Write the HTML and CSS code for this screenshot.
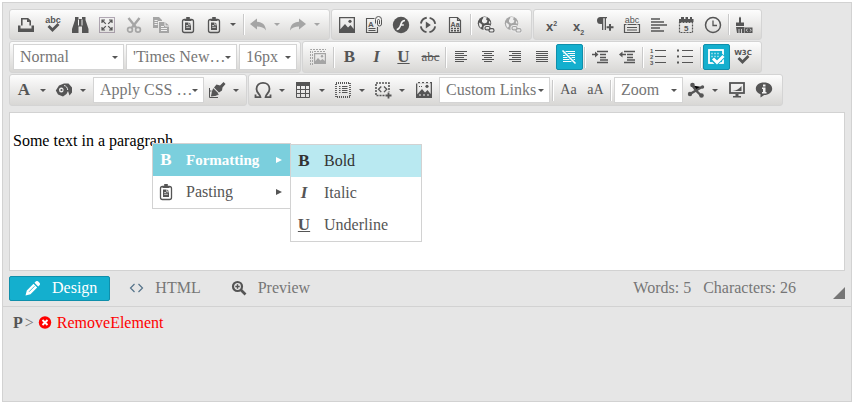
FILE: index.html
```html
<!DOCTYPE html>
<html lang="en">
<head>
<meta charset="utf-8">
<title>Editor</title>
<link rel="stylesheet" href="styles.css">
</head>
<body>
<svg class="sprite" aria-hidden="true">
  <symbol id="print" viewBox="0 0 18 18"><path fill="none" stroke="currentColor" stroke-width="1.600" d="M4.800 9.500V2.800h6l2.400 2.400V9.500"/><path fill="currentColor" d="M1 9.500h2.500v3h11v-3H17V16H1zM10 2.500v3.500h3.500z"/></symbol>
  <symbol id="spell" viewBox="0 0 18 18"><text class="g-sans" x="9" y="6.500" font-size="9" text-anchor="middle">abc</text><path fill="none" stroke="currentColor" stroke-width="2.800" d="M4.500 10l4 4 6-6"/></symbol>
  <symbol id="find" viewBox="0 0 18 18"><path fill="currentColor" d="M4 1h3.500v2H11V1h3.500v3L17.500 13v4H11v-6.500H7.500V17H1v-4L4 4z"/><path stroke="#f4f4f4" d="M7.500 3.500v6M11 3.500v6" stroke-width="1"/></symbol>
  <symbol id="selectall" viewBox="0 0 18 18"><rect x="1.500" y="1.500" width="15" height="15" fill="none" stroke="#6d5a72" stroke-dasharray="1 1"/><path fill="none" stroke="currentColor" stroke-width="1.200" d="M4 7V4h3M11 4h3v3M14 11v3h-3M7 14H4v-3M4 4l3.800 3.800M14 4l-3.800 3.800M4 14l3.800-3.800M14 14l-3.800-3.800"/></symbol>
  <symbol id="cut" viewBox="0 0 18 18"><path fill="none" stroke="currentColor" stroke-width="2.400" d="M3.500 2l7.500 9.500M14.500 2L7 11.500"/><circle cx="5" cy="13.800" r="2.400" fill="none" stroke="currentColor" stroke-width="1.700"/><circle cx="13" cy="13.800" r="2.400" fill="none" stroke="currentColor" stroke-width="1.700"/></symbol>
  <symbol id="copy" viewBox="0 0 18 18"><path fill="currentColor" d="M1 1h6l3 3v1H6v7H1z"/><path fill="currentColor" d="M7 6h6l4 3.500V17H7z"/><path stroke="#f0f0f0" d="M2.500 4.500h3M2.500 6.500h3M2.500 8.500h3M9 10.500h3M9 12.500h6M9 14.500h6M13 6v4h4" fill="none"/></symbol>
  <symbol id="paste" viewBox="0 0 18 18"><rect x="3.500" y="3.500" width="11" height="13" rx="2" fill="none" stroke="currentColor" stroke-width="1.300"/><path fill="currentColor" d="M5.500 5V3h1.700V1h3.600v2h1.700v2zM6 6.500h3.500v2.700H12V14H6z"/><path fill="currentColor" d="M10.200 6.500l2 2h-2z"/><path d="M7.200 9.500H9M7.200 11.300h3.600" stroke="#eee" stroke-width=".8"/></symbol>
  <symbol id="undo" viewBox="0 0 18 18"><path fill="currentColor" d="M1 8L8 2.500v3.300c5.500.2 8.500 3.200 9 8.700-2-3-5-4-9-4v3z"/></symbol>
  <symbol id="redo" viewBox="0 0 18 18"><path fill="currentColor" d="M17 8l-7-5.500v3.300c-5.500.2-8.500 3.200-9 8.700 2-3 5-4 9-4v3z"/></symbol>
  <symbol id="image" viewBox="0 0 18 18"><path fill="currentColor" fill-rule="evenodd" d="M1 1h16v16H1zM2.300 2.300v11L7 8l3 3.500L12.500 9l3.200 4V2.300z"/><circle cx="12" cy="5.300" r="1.600" fill="currentColor"/></symbol>
  <symbol id="attach" viewBox="0 0 18 18"><path fill="none" stroke="currentColor" stroke-width="1.100" d="M9.500 2.500h-8v14h11V11M3.500 14.500h7M3.500 12.500h7"/><text class="g-sans" x="3" y="10.700" font-size="8">A</text><path fill="none" stroke="currentColor" stroke-width="1" d="M10.500 7.500V3.500a3 3 0 0 1 6 0V8a2 2 0 0 1-4 0V4.500a1 1 0 0 1 2 0V8"/></symbol>
  <symbol id="flash" viewBox="0 0 18 18"><circle cx="9" cy="9" r="8.200" fill="currentColor"/><path fill="none" stroke="#f4f4f4" stroke-width="1.600" d="M13 4.500c-3.500 0-3.500 2-4.300 4.500s-1.400 4.500-4 4.500M8 9h3.800"/></symbol>
  <symbol id="media" viewBox="0 0 18 18"><circle cx="9" cy="9" r="7.300" fill="none" stroke="currentColor" stroke-width="1.900" stroke-dasharray="8.500 2.960" stroke-dashoffset="10"/><path fill="currentColor" d="M6.800 5.500l5 3.500-5 3.500z"/></symbol>
  <symbol id="template" viewBox="0 0 18 18"><path fill="none" stroke="currentColor" stroke-width="1.200" d="M3.500 1.500h8l3 3v12h-11zM11.500 1.500v3h3"/><text class="g-sans" x="4.600" y="10.500" font-size="7">Aa</text><path stroke="currentColor" stroke-width="1.400" stroke-dasharray="2 1" d="M5 12.500h8M5 14.700h8"/></symbol>
  <symbol id="link" viewBox="0 0 18 18"><circle cx="7.500" cy="7.200" r="6.700" fill="currentColor"/><path fill="#eee" d="M6.500 1c1.500-.2 2.500 0 3.500.5L9 3.200l1.500 1.500-1 2-2.500.8-2-1.500V4L6 2.500zM2.200 6.500l2.500 1.700.3 2-1.200 1.600C2.300 10.500 1.800 8.500 2.200 6.500zM12 5l1.200.8.2 2-1.600-.5z"/><g fill="none" stroke="#ebebeb" stroke-width="3.200"><rect x="8" y="10.500" width="5" height="3.300" rx="1.600"/><rect x="12" y="12.700" width="5" height="3.300" rx="1.600"/></g><g fill="none" stroke="currentColor" stroke-width="1.200"><rect x="8" y="10.500" width="5" height="3.300" rx="1.600"/><rect x="12" y="12.700" width="5" height="3.300" rx="1.600"/></g></symbol>
  <symbol id="para" viewBox="0 0 18 18"><path fill="currentColor" d="M4.500 1H11v1.200h-1V14H8.700V2.200H7.300V14H6V8H4.500a3.500 3.500 0 0 1 0-7zM13 8h2v2.300h2.500v2H15v2.400h-2v-2.400h-2.400v-2H13z"/></symbol>
  <symbol id="groupbox" viewBox="0 0 18 18"><text class="g-plain" x="9" y="6.500" font-size="9" text-anchor="middle">abc</text><path fill="none" stroke="currentColor" stroke-width="1.200" d="M3.500 8.500h-2v8h15v-8h-2M4.500 8.500h9M4 11.500h10M4 14h10"/></symbol>
  <symbol id="rule" viewBox="0 0 18 18"><path stroke="currentColor" stroke-width="1.500" d="M1 3h9M1 6h13M1 9h16M1 12h9M1 15h13"/></symbol>
  <symbol id="date" viewBox="0 0 18 18"><path fill="currentColor" d="M2 3h2V1h3v2h1.500V1H11v2h2V1h2v2h1.500v3H2z"/><rect x="2.500" y="6.500" width="13" height="10" fill="none" stroke="currentColor" stroke-dasharray="2 1" stroke-width="1.200"/><text class="g-sans" x="9.200" y="14.500" font-size="8" text-anchor="middle">5</text></symbol>
  <symbol id="time" viewBox="0 0 18 18"><circle cx="9" cy="9" r="7.500" fill="none" stroke="currentColor" stroke-width="1.500"/><path fill="none" stroke="currentColor" stroke-width="1.300" d="M9 4.500v5h4"/></symbol>
  <symbol id="strip" viewBox="0 0 18 18"><path fill="currentColor" d="M4 2l1-1.500L6 2v4.500h3V10H1V6.500h3zM1 11h8.500v6H2z"/><rect x="10" y="11.500" width="7.500" height="5.500" fill="currentColor"/><path stroke="#eee" d="M4 13v4M6.500 13v4M12.500 12.700l-1.200 1.500 1.200 1.500M15 12.700l1.200 1.500-1.200 1.500" fill="none" stroke-width=".8"/></symbol>
  <symbol id="position" viewBox="0 0 18 18"><path fill="none" stroke="currentColor" stroke-dasharray="2 1" d="M1.500 17V1.500H17M3.500 17V3.500H17"/><path fill="currentColor" fill-rule="evenodd" d="M5 5h12v11H5zM6.200 6.200v7L9 10l2.500 2.500L13.500 11l2.300 2V6.200z"/><circle cx="13" cy="8.300" r="1.200" fill="currentColor"/></symbol>
  <symbol id="left" viewBox="0 0 18 18"><path stroke="currentColor" stroke-width="1" d="M3 3.500h12M3 5.500h9M3 7.500h12M3 9.500h9M3 11.500h12M3 13.500h9"/></symbol>
  <symbol id="center" viewBox="0 0 18 18"><path stroke="currentColor" stroke-width="1" d="M3 3.500h12M5 5.500h8M3 7.500h12M5 9.500h8M3 11.500h12M5 13.500h8"/></symbol>
  <symbol id="right" viewBox="0 0 18 18"><path stroke="currentColor" stroke-width="1" d="M3 3.500h12M6 5.500h9M3 7.500h12M6 9.500h9M3 11.500h12M6 13.500h9"/></symbol>
  <symbol id="full" viewBox="0 0 18 18"><path stroke="currentColor" stroke-width="1" d="M3 3.500h12M3 5.500h12M3 7.500h12M3 9.500h12M3 11.500h12M3 13.500h12"/></symbol>
  <symbol id="nojust" viewBox="0 0 18 18"><path stroke="currentColor" stroke-width="1" d="M3 3.500h12M3 5.500h12M3 7.500h12M3 9.500h12M3 11.500h12M3 13.500h12"/><path stroke="#14afce" stroke-width="3" d="M3 3l12 12"/><path stroke="currentColor" stroke-width="1.600" d="M2.500 2.500l13 13"/></symbol>
  <symbol id="indent" viewBox="0 0 18 18"><path stroke="currentColor" stroke-width="1.400" d="M6 3.500h11M9 6.500h6M9 9.500h6M9 12h8M6 14.500h11M1 6.500h4"/><path fill="currentColor" d="M4 3.500l3.500 3L4 9.500z"/></symbol>
  <symbol id="outdent" viewBox="0 0 18 18"><path stroke="currentColor" stroke-width="1.400" d="M6 3.500h11M9 6.500h6M9 9.500h6M9 12h8M6 14.500h11M4 6.500h4"/><path fill="currentColor" d="M4.500 3.500L1 6.500l3.500 3z"/></symbol>
  <symbol id="ol" viewBox="0 0 18 18"><path stroke="currentColor" stroke-width="1" d="M6 2.500h11M6 8.500h11M6 14.500h11"/><g class="g-sans" font-size="6"><text x="1" y="4.500">1</text><text x="1" y="10.500">2</text><text x="1" y="16.500">3</text></g></symbol>
  <symbol id="ul" viewBox="0 0 18 18"><path stroke="currentColor" stroke-width="1" d="M6 2.500h11M6 8.500h11M6 14.500h11"/><path fill="currentColor" d="M1 1.500h2v2H1zM1 7.500h2v2H1zM1 13.500h2v2H1z"/></symbol>
  <symbol id="borders" viewBox="0 0 18 18"><rect x="2" y="2" width="14" height="13" fill="none" stroke="currentColor" stroke-width="1.800"/><path stroke="currentColor" stroke-dasharray="1 2" stroke-width="1.300" d="M4.500 5.500h9M4.500 8.500h9"/><path fill="none" stroke="#14afce" stroke-width="5" d="M5.500 10.500l4 4 7.500-7"/><path fill="none" stroke="currentColor" stroke-width="3" d="M6 10.500l4 4 6.500-6.500"/></symbol>
  <symbol id="w3c" viewBox="0 0 18 18"><text class="g-bold" x="9" y="6.500" font-size="7" text-anchor="middle">W3C</text><path fill="none" stroke="currentColor" stroke-width="2.800" d="M4.500 10l4 4 6-6"/></symbol>
  <symbol id="fill" viewBox="0 0 18 18"><path fill="currentColor" d="M.8 9.500L4 4.500 9 2.500h4.500l3.500 4v5l-2.500 3-1.500-4.500-1.500 3-3.500 2.500-5-2z"/><ellipse cx="6.300" cy="9" rx="2.300" ry="2.600" fill="#eee"/><circle cx="6.500" cy="9" r="1.100" fill="currentColor"/><path fill="none" stroke="#e9e9e9" d="M9 4.500c2 .3 3.500 2 3.700 4.500"/></symbol>
  <symbol id="format" viewBox="0 0 18 18"><path fill="currentColor" d="M12 4.500L15.500 1 17.500 3 14.500 6.500l-.5 3-3 2-5-5 2.500-3z"/><path fill="currentColor" d="M5.300 7.200l5 5-2.300 2.600-5 .7 1-5.500z"/><path fill="none" stroke="currentColor" d="M1.500 7v9.500H10M3.500 14.500l7-1M1.500 10h2"/></symbol>
  <symbol id="omega" viewBox="0 0 18 18"><path fill="none" stroke="currentColor" stroke-width="1.800" d="M1.500 13.500v2.700h5c0-3-4-4-4-8.200C2.500 4 5.500 1.800 9 1.800S15.500 4 15.500 8c0 4.200-4 5.200-4 8.200h5v-2.700"/></symbol>
  <symbol id="table" viewBox="0 0 18 18"><path fill="currentColor" d="M2 1h14v4H2z"/><path fill="none" stroke="currentColor" d="M2.500 5v11.500h13V5M2 8.500h14M2 12.500h14M6.500 5v12M11.500 5v12"/></symbol>
  <symbol id="snippet" viewBox="0 0 18 18"><rect x="2" y="2" width="14" height="14" fill="none" stroke="currentColor" stroke-width="1.800" stroke-dasharray="1 1"/><path stroke="currentColor" d="M5 5.500h1.500M8 5.500h5.500M5 7.500h1.500M8 7.500h5.500M5 9.500h1.500M8 9.500h5.500M5 11.500h1.500M8 11.500h5.500"/></symbol>
  <symbol id="codeadd" viewBox="0 0 18 18"><path fill="none" stroke="currentColor" stroke-width="1.600" stroke-dasharray="2 1" d="M10.500 14.500H2V2h13v8.500"/><path fill="none" stroke="currentColor" stroke-width="1.300" d="M7.300 5.500L4.500 8.300l2.800 2.800M10 5.500l2.800 2.800L10 11.100"/><path stroke="currentColor" stroke-width="1.800" d="M14.500 11.500v6M11.500 14.500h6"/></symbol>
  <symbol id="imagemap" viewBox="0 0 18 18"><use href="#image"/><path stroke="#eee" stroke-width="1.500" stroke-dasharray="2 2" d="M1 1.700h16"/><path stroke="#eee" stroke-width="1.200" stroke-dasharray="2 2" d="M4 14h10"/><path stroke="currentColor" d="M4 5.500h4" stroke-dasharray="1 1"/></symbol>
  <symbol id="nodes" viewBox="0 0 18 18"><path stroke="currentColor" stroke-width="2.400" d="M5.500 4.500l3.500 5 6-3.500M9 9.500l-6 3.500M9 9.500l5 5"/><g fill="currentColor"><circle cx="5.500" cy="4" r="2.300"/><circle cx="15.500" cy="6" r="1.700"/><circle cx="3" cy="13" r="2.200"/><circle cx="14.500" cy="14.500" r="2.300"/></g></symbol>
  <symbol id="monitor" viewBox="0 0 18 18"><rect x="2" y="2" width="14" height="10" fill="none" stroke="currentColor" stroke-width="1.800"/><path fill="currentColor" d="M4.500 10C8.500 9.500 11 8 13.500 5v5zM7.500 13h3v2H13v1.500H5V15h2.500z"/></symbol>
  <symbol id="info" viewBox="0 0 18 18"><path fill="currentColor" d="M9 1.500c5 0 8.200 2.600 8.200 6.200 0 3.700-3.700 6.300-8 6.300L5.500 16.500v-3.300C2.500 12.200.8 10.200.8 7.700.8 4.100 4 1.500 9 1.500z"/><path fill="#f2f2f2" d="M8 3.500h2.500v2H8zM7 6.500h3.500V11h1v1.500H7V11h1V8H7z"/></symbol>
  <symbol id="pencil" viewBox="0 0 18 18"><path fill="currentColor" d="M1.500 16.500l1.300-5L9.500 4.800l3.700 3.700-6.700 6.700zM10.500 3.800L12 2.300q1-.8 2 0l1.700 1.700q.8 1 0 2l-1.500 1.500z"/><path stroke="#14afce" stroke-width=".8" d="M5 12.800l5.500-5.500"/></symbol>
  <symbol id="code" viewBox="0 0 18 18"><path fill="none" stroke="currentColor" stroke-width="1.200" d="M7.500 5l-4 4 4 4M11.500 5l4 4-4 4"/></symbol>
  <symbol id="zoomin" viewBox="0 0 18 18"><circle cx="7.500" cy="7.500" r="4.500" fill="none" stroke="currentColor" stroke-width="2.200"/><path stroke="currentColor" stroke-width="1.400" d="M5.300 7.500h4.400M7.500 5.300v4.400"/><path stroke="currentColor" stroke-width="2.600" d="M11 11l4.500 4.500"/></symbol>
  <symbol id="remove" viewBox="0 0 18 18"><circle cx="9" cy="8.500" r="6.200" fill="currentColor"/><path stroke="#fff" stroke-width="1.900" d="M6.500 6l5 5M11.500 6l-5 5"/></symbol>
</svg>

<main class="editor">
  <div class="toolbars">
    <div class="row row-short">
      <div class="group g-clipboard">
        <button class="tool" aria-label="Print"><svg><use href="#print"/></svg></button>
        <button class="tool" aria-label="Spell check"><svg><use href="#spell"/></svg></button>
        <button class="tool" aria-label="Find"><svg><use href="#find"/></svg></button>
        <button class="tool" aria-label="Select all"><svg><use href="#selectall"/></svg></button>
        <button class="tool" disabled aria-label="Cut"><svg><use href="#cut"/></svg></button>
        <button class="tool" disabled aria-label="Copy"><svg><use href="#copy"/></svg></button>
        <button class="tool" aria-label="Paste"><svg><use href="#paste"/></svg></button>
        <button class="tool split" aria-label="Paste options"><svg><use href="#paste"/></svg><i class="caret"></i></button>
        <span class="sep"></span>
        <button class="tool split" disabled aria-label="Undo"><svg><use href="#undo"/></svg><i class="caret"></i></button>
        <button class="tool split" disabled aria-label="Redo"><svg><use href="#redo"/></svg><i class="caret"></i></button>
      </div>
      <div class="group g-insert">
        <button class="tool" aria-label="Image manager"><svg><use href="#image"/></svg></button>
        <button class="tool" aria-label="Document manager"><svg><use href="#attach"/></svg></button>
        <button class="tool" aria-label="Flash manager"><svg><use href="#flash"/></svg></button>
        <button class="tool" aria-label="Media manager"><svg><use href="#media"/></svg></button>
        <button class="tool" aria-label="Template manager"><svg><use href="#template"/></svg></button>
        <span class="sep"></span>
        <button class="tool" aria-label="Insert link"><svg><use href="#link"/></svg></button>
        <button class="tool" disabled aria-label="Remove link"><svg><use href="#link"/></svg></button>
      </div>
      <div class="group g-script">
        <button class="tool script" aria-label="Superscript"><span>x<sup>2</sup></span></button>
        <button class="tool script" aria-label="Subscript"><span>x<sub>2</sub></span></button>
        <button class="tool" aria-label="New paragraph"><svg><use href="#para"/></svg></button>
        <button class="tool" aria-label="Group box"><svg><use href="#groupbox"/></svg></button>
        <button class="tool" aria-label="Horizontal rule"><svg><use href="#rule"/></svg></button>
        <button class="tool" aria-label="Insert date"><svg><use href="#date"/></svg></button>
        <button class="tool" aria-label="Insert time"><svg><use href="#time"/></svg></button>
        <span class="sep"></span>
        <button class="tool" aria-label="Format stripper"><svg><use href="#strip"/></svg></button>
      </div>
    </div>
    <div class="row">
      <div class="group g-font">
        <span class="pick pick-wide"><select aria-label="Paragraph style"><option>Normal</option></select></span>
        <span class="pick pick-wide"><select aria-label="Font name"><option>'Times New…</option></select></span>
        <span class="pick pick-small"><select aria-label="Font size"><option>16px</option></select></span>
      </div>
      <div class="group g-text">
        <button class="tool" disabled aria-label="Absolute position"><svg><use href="#position"/></svg></button>
        <span class="sep"></span>
        <button class="tool glyph bold">B</button>
        <button class="tool glyph italic">I</button>
        <button class="tool glyph under">U</button>
        <button class="tool glyph strike">abc</button>
        <span class="sep"></span>
        <button class="tool" aria-label="Align left"><svg><use href="#left"/></svg></button>
        <button class="tool" aria-label="Align center"><svg><use href="#center"/></svg></button>
        <button class="tool" aria-label="Align right"><svg><use href="#right"/></svg></button>
        <button class="tool" aria-label="Justify"><svg><use href="#full"/></svg></button>
        <button class="tool active" aria-label="No justify"><svg><use href="#nojust"/></svg></button>
        <span class="sep"></span>
        <button class="tool" aria-label="Indent"><svg><use href="#indent"/></svg></button>
        <button class="tool" aria-label="Outdent"><svg><use href="#outdent"/></svg></button>
        <span class="sep"></span>
        <button class="tool" aria-label="Numbered list"><svg><use href="#ol"/></svg></button>
        <button class="tool" aria-label="Bullet list"><svg><use href="#ul"/></svg></button>
        <span class="sep"></span>
        <button class="tool active" aria-label="Show borders"><svg><use href="#borders"/></svg></button>
        <button class="tool" aria-label="Validate"><svg><use href="#w3c"/></svg></button>
      </div>
    </div>
    <div class="row">
      <div class="group g-color">
        <button class="tool split glyph bold"><span>A</span><i class="caret"></i></button>
        <button class="tool split" aria-label="Background color"><svg><use href="#fill"/></svg><i class="caret"></i></button>
        <span class="pick pick-wide"><select aria-label="CSS class"><option>Apply CSS …</option></select></span>
        <button class="tool split" aria-label="Format sets"><svg><use href="#format"/></svg><i class="caret"></i></button>
      </div>
      <div class="group g-more">
        <button class="tool split" aria-label="Symbol"><svg><use href="#omega"/></svg><i class="caret"></i></button>
        <button class="tool split" aria-label="Table"><svg><use href="#table"/></svg><i class="caret"></i></button>
        <button class="tool split" aria-label="Form element"><svg><use href="#snippet"/></svg><i class="caret"></i></button>
        <button class="tool split" aria-label="Code snippet"><svg><use href="#codeadd"/></svg><i class="caret"></i></button>
        <button class="tool" aria-label="Image map"><svg><use href="#imagemap"/></svg></button>
        <span class="pick pick-wide"><select aria-label="Custom links"><option>Custom Links</option></select></span>
        <span class="sep"></span>
        <button class="tool glyph case">Aa</button>
        <button class="tool glyph case">aA</button>
        <span class="sep"></span>
        <span class="pick pick-zoom"><select aria-label="Zoom"><option>Zoom</option></select></span>
        <button class="tool split" aria-label="Modules"><svg><use href="#nodes"/></svg><i class="caret"></i></button>
        <button class="tool" aria-label="Full screen"><svg><use href="#monitor"/></svg></button>
        <button class="tool" aria-label="About"><svg><use href="#info"/></svg></button>
      </div>
    </div>
  </div>

  <section class="content">
    <p>Some text in a paragraph</p>
    <div class="menu menu-main" role="menu">
      <button class="item open" role="menuitem"><b class="mark">B</b><span>Formatting</span><i class="more"></i></button>
      <button class="item" role="menuitem"><svg class="mark"><use href="#paste"/></svg><span>Pasting</span><i class="more"></i></button>
    </div>
    <div class="menu menu-sub" role="menu">
      <button class="item hover" role="menuitem"><b class="mark">B</b><span>Bold</span></button>
      <button class="item" role="menuitem"><b class="mark italic">I</b><span>Italic</span></button>
      <button class="item" role="menuitem"><b class="mark under">U</b><span>Underline</span></button>
    </div>
  </section>

  <div class="modes">
    <button class="mode current"><svg><use href="#pencil"/></svg>Design</button>
    <button class="mode mode-html"><svg><use href="#code"/></svg>HTML</button>
    <button class="mode"><svg><use href="#zoomin"/></svg>Preview</button>
    <div class="counts"><span>Words: 5</span><span>Characters: 26</span></div>
    <i class="grip"></i>
  </div>

  <div class="path">
    <a href="#" class="tag">P</a><span>&gt;</span>
    <a href="#" class="remove"><svg><use href="#remove"/></svg>RemoveElement</a>
  </div>
</main>
</body>
</html>
```

FILE: styles.css
```css
* { box-sizing: border-box; }

body {
  margin: 0;
  padding: 2px;
  min-height: 100vh;
  display: flex;
  background: #fff;
  font: 16px/18px "Liberation Serif", serif;
  color: #767676;
}

button, select { font: inherit; color: inherit; }

.sprite { display: none; }
.g-sans, .g-plain { font-family: "Liberation Sans", sans-serif; font-weight: 700; fill: currentColor; }
.g-plain { font-weight: 400; }
.g-bold { font-family: "DejaVu Sans", sans-serif; font-weight: 700; fill: currentColor; }

.editor {
  flex: 1;
  display: flex;
  flex-direction: column;
  border: 1px solid #d2d2d2;
  background: #e6e6e6;
}

/* toolbars */
.toolbars { display: grid; gap: 1px; padding: 6px 6px 0; }
.row { display: flex; gap: 1px; height: 32px; }
.row-short { height: 31px; }
.group {
  display: flex;
  align-items: center;
  padding: 0 2px;
  border: 1px solid #d4d4d4;
  border-radius: 3px;
  background: linear-gradient(#fdfdfd, #d8d7d5);
}
.g-clipboard { width: 321px; padding-left: 3px; }
.g-insert { width: 201px; }
.g-script { width: 229px; padding-left: 4px; }
.g-font { width: 292px; }
.g-text { width: 460px; }
.g-color { width: 238px; padding-right: 0; }
.g-more { width: 535px; }

.tool {
  flex: none;
  width: 27px;
  height: 26px;
  padding: 0 4px 0 3px;
  border: 1px solid transparent;
  border-radius: 2px;
  background: none;
  color: #555;
  display: flex;
  align-items: center;
  justify-content: center;
}
.split { width: 40px; padding: 0; justify-content: flex-start; }
.split > :first-child { width: 18px; margin: 0 4px 0 2px; }
.tool svg, .mode svg, .path svg { width: 18px; height: 18px; flex: none; }
.tool:disabled { color: #a5a5a5; }
.active { background: #14afce; border-color: #0f8fab; color: #fff; }
.caret {
  border: 3px solid transparent;
  border-top-color: currentColor;
  border-bottom: 0;
  margin-left: 3px;
}
.sep { width: 2px; height: 21px; margin: 0 1px; background: #fff; border-left: 1px solid #c9c9c9; }

.glyph { font-size: 17px; padding: 0; }
.bold { font-weight: 700; }
.italic { font-weight: 700; font-style: italic; }
.under { font-weight: 700; text-decoration: underline; }
.strike { font-size: 13px; text-decoration: line-through; }
.case { font-size: 14px; }
.script { padding: 4px 0 0; font: 700 13px/18px "Liberation Sans", sans-serif; }
.script sup, .script sub { font-size: 7px; line-height: 0; }

.pick { position: relative; height: 26px; margin: 0 1px; flex: none; }
.pick-wide { width: 111px; }
.pick-small { width: 58px; }
.pick-zoom { width: 69px; }
.pick select {
  appearance: none;
  width: 100%;
  height: 100%;
  padding: 0 0 1px 6px;
  border: 1px solid #d4d4d4;
  border-radius: 0;
  background: #fff;
}
.pick::after {
  content: "";
  position: absolute;
  right: 6px;
  top: 12px;
  border: 3px solid transparent;
  border-top-color: #555;
  border-bottom: 0;
  pointer-events: none;
}

/* content */
.content {
  position: relative;
  height: 159px;
  margin: 6px 6px 0;
  padding: 19px 3px 0;
  border: 1px solid #d2d2d2;
  background: #fff;
  color: #000;
}
.content p { margin: 0; }

.menu {
  position: absolute;
  border: 1px solid #d2d2d2;
  background: #fff;
}
.menu-main { left: 142px; top: 30px; width: 139px; }
.menu-sub { left: 280px; top: 31px; width: 132px; }
.item {
  display: flex;
  align-items: center;
  width: 100%;
  height: 32px;
  padding: 0 8px 0 4px;
  border: 0;
  background: none;
  color: #555;
  text-align: left;
}
.item span { flex: 1; }
.mark { width: 18px; height: 18px; margin-right: 11px; text-align: center; font-size: 17px; }
.open { background: #7bcfdd; color: #fff; font-weight: 700; font-size: 15px; }
.hover { background: #b9e9f1; color: #333; }
.more {
  border: 3px solid transparent;
  border-left: 6px solid currentColor;
  border-right: 0;
}

/* mode bar */
.modes {
  display: flex;
  align-items: center;
  height: 36px;
  padding: 0 6px;
  border-bottom: 1px solid #d2d2d2;
}
.mode {
  display: flex;
  align-items: center;
  gap: 10px;
  height: 25px;
  padding: 0 13px 1px;
  border: 1px solid transparent;
  border-radius: 2px;
  background: none;
}
.mode svg { color: #555; }
.current { background: #14afce; border-color: #0f8fab; color: #fff; padding: 0 12px 1px 14px; }
.current svg { color: #fff; }
.mode-html { margin: 0 1px 0 3px; }
.mode-html svg { color: #55738a; }
.counts { display: flex; gap: 12px; margin-left: auto; padding-bottom: 1px; }
.grip {
  align-self: flex-end;
  margin: 0 0 7px 37px;
  border: 6px solid transparent;
  border-right-color: #767676;
  border-bottom-color: #767676;
}

/* element path */
.path { display: flex; align-items: center; gap: 2px; padding: 7px 10px; }
.path a { color: #555; text-decoration: none; }
.path .tag { font-weight: 700; }
.path .remove { display: flex; align-items: center; gap: 3px; color: #f00; }
```
